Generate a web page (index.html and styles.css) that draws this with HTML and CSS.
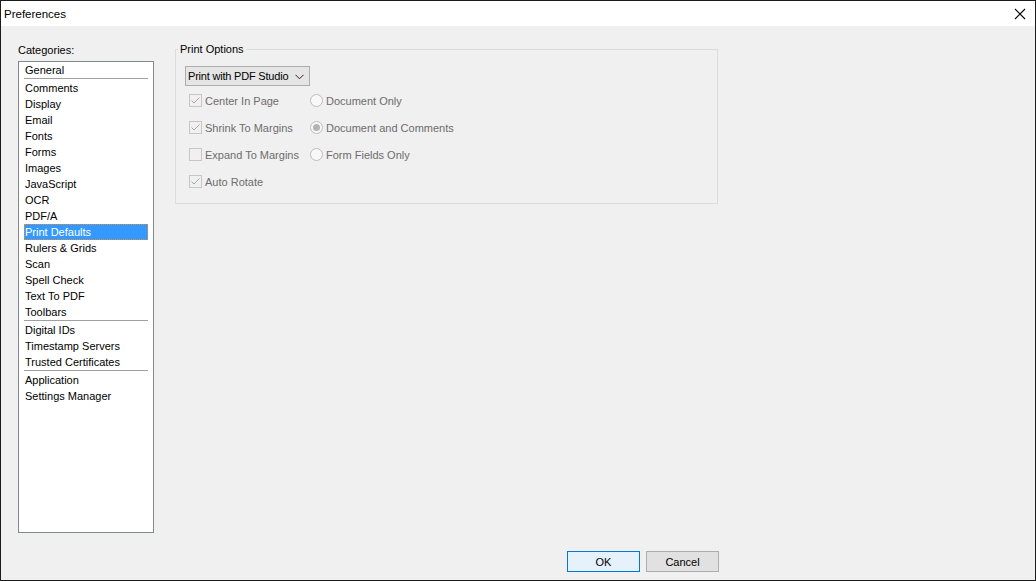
FILE: index.html
```html
<!DOCTYPE html>
<html>
<head>
<meta charset="utf-8">
<title>Preferences</title>
<link rel="stylesheet" href="styles.css">
</head>
<body>
<div class="window">
  <div class="titlebar">
    <span class="title">Preferences</span>
    <svg class="close" width="12" height="12" viewBox="0 0 12 12"><path d="M1 1 L11 11 M11 1 L1 11" stroke="#000" stroke-width="1.1" fill="none"/></svg>
  </div>
  <div class="content">
    <div class="main">
      <div class="cats">
        <div class="cats-label">Categories:</div>
        <div class="listbox">
          <div class="item">General</div>
          <div class="sep"></div>
          <div class="item">Comments</div>
          <div class="item">Display</div>
          <div class="item">Email</div>
          <div class="item">Fonts</div>
          <div class="item">Forms</div>
          <div class="item">Images</div>
          <div class="item">JavaScript</div>
          <div class="item">OCR</div>
          <div class="item">PDF/A</div>
          <div class="item selected">Print Defaults</div>
          <div class="item">Rulers &amp; Grids</div>
          <div class="item">Scan</div>
          <div class="item">Spell Check</div>
          <div class="item">Text To PDF</div>
          <div class="item">Toolbars</div>
          <div class="sep"></div>
          <div class="item">Digital IDs</div>
          <div class="item">Timestamp Servers</div>
          <div class="item">Trusted Certificates</div>
          <div class="sep"></div>
          <div class="item">Application</div>
          <div class="item">Settings Manager</div>
        </div>
      </div>
      <fieldset class="group">
        <legend>Print Options</legend>
        <div class="select">
          <span class="select-text">Print with PDF Studio</span>
          <svg class="chev" width="9" height="6" viewBox="0 0 9 6"><path d="M0.5 0.8 L4.5 4.8 L8.5 0.8" stroke="#222" stroke-width="1" fill="none"/></svg>
        </div>
        <div class="opts">
          <div class="opt"><span class="cb"><svg width="11" height="11" viewBox="0 0 11 11"><path d="M1.5 5.5 L4 8 L9.5 2.5" stroke="#a8a8a8" stroke-width="1" fill="none"/></svg></span>Center In Page</div>
          <div class="opt"><span class="rb"></span>Document Only</div>
          <div class="opt"><span class="cb"><svg width="11" height="11" viewBox="0 0 11 11"><path d="M1.5 5.5 L4 8 L9.5 2.5" stroke="#a8a8a8" stroke-width="1" fill="none"/></svg></span>Shrink To Margins</div>
          <div class="opt"><span class="rb on"><span class="dot"></span></span>Document and Comments</div>
          <div class="opt"><span class="cb"></span>Expand To Margins</div>
          <div class="opt"><span class="rb"></span>Form Fields Only</div>
          <div class="opt"><span class="cb"><svg width="11" height="11" viewBox="0 0 11 11"><path d="M1.5 5.5 L4 8 L9.5 2.5" stroke="#a8a8a8" stroke-width="1" fill="none"/></svg></span>Auto Rotate</div>
        </div>
      </fieldset>
    </div>
    <div class="footer">
      <button class="btn btn-default">OK</button>
      <button class="btn">Cancel</button>
    </div>
  </div>
</div>
</body>
</html>
```
FILE: styles.css
```css
* { box-sizing: border-box; }
html, body { margin: 0; padding: 0; }
body {
  width: 1036px;
  height: 581px;
  overflow: hidden;
  font-family: "Liberation Sans", Arial, sans-serif;
  font-size: 11px;
  color: #000;
  background: #f0f0f0;
}
.window {
  width: 1036px;
  height: 581px;
  border: 1px solid #1c1c1c;
  background: #f0f0f0;
  display: flex;
  flex-direction: column;
}
.titlebar {
  height: 25px;
  background: #fff;
  display: flex;
  align-items: center;
  justify-content: space-between;
  padding: 0 9px 0 3px;
}
.title {
  font-size: 11.5px;
  line-height: 14px;
  padding-top: 1px;
}
.close { display: block; margin-top: 1px; }
.content {
  width: 718px;
  padding: 17px 0 0 17px;
  display: flex;
  flex-direction: column;
}
.main {
  display: flex;
  gap: 21px;
  align-items: flex-start;
}
.cats { width: 136px; }
.cats-label {
  height: 18px;
  line-height: 13px;
  padding-top: 1px;
}
.listbox {
  height: 472px;
  border: 1px solid #828790;
  background: #fff;
  padding: 0 5px;
}
.item {
  height: 16px;
  line-height: 16px;
  padding-left: 1px;
  white-space: nowrap;
}
.item.selected {
  background: #3399ff;
  color: #fff;
  outline: 1px dotted #e5893a;
  outline-offset: -1px;
}
.sep {
  height: 2px;
  border-top: 1px solid #a0a0a0;
}
.group {
  width: 543px;
  height: 161px;
  margin: 0;
  border: 1px solid #dcdcdc;
  padding: 10px 9px 8px 9px;
  min-width: 0;
}
.group legend {
  padding: 0 2px;
  margin-left: -7px;
  line-height: 13px;
}
.select {
  width: 125px;
  height: 20px;
  border: 1px solid #adadad;
  background: #e5e5e5;
  display: flex;
  align-items: center;
  padding: 0 5px 0 2px;
  white-space: nowrap;
}
.select-text {
  letter-spacing: -0.2px;
}
.chev { display: block; margin: 1px 0 0 auto; }
.opts {
  display: grid;
  grid-template-columns: 121px auto;
  grid-auto-rows: 27px;
  padding: 1px 0 0 4px;
}
.opt {
  display: flex;
  align-items: center;
  color: #6d6d6d;
  white-space: nowrap;
}
.cb {
  width: 13px;
  height: 13px;
  border: 1px solid #c6c6c6;
  background: #f0f0f0;
  margin-right: 3px;
  display: flex;
  align-items: center;
  justify-content: center;
}
.cb svg { display: block; }
.rb {
  width: 13px;
  height: 13px;
  border: 1px solid #bcbcbc;
  border-radius: 50%;
  background: #f8f8f8;
  margin-right: 3px;
  display: flex;
  align-items: center;
  justify-content: center;
}
.rb .dot {
  width: 7px;
  height: 7px;
  border-radius: 50%;
  background: #b4b4b4;
}
.footer {
  display: flex;
  justify-content: flex-end;
  gap: 6px;
  margin-top: 18px;
}
.btn {
  width: 73px;
  height: 21px;
  margin: 0;
  padding: 0;
  font-family: "Liberation Sans", Arial, sans-serif;
  font-size: 11px;
  color: #000;
  border: 1px solid #adadad;
  background: #e1e1e1;
  border-radius: 0;
}
.btn-default {
  border-color: #0078d7;
  background: #e5f1fb;
}
```
